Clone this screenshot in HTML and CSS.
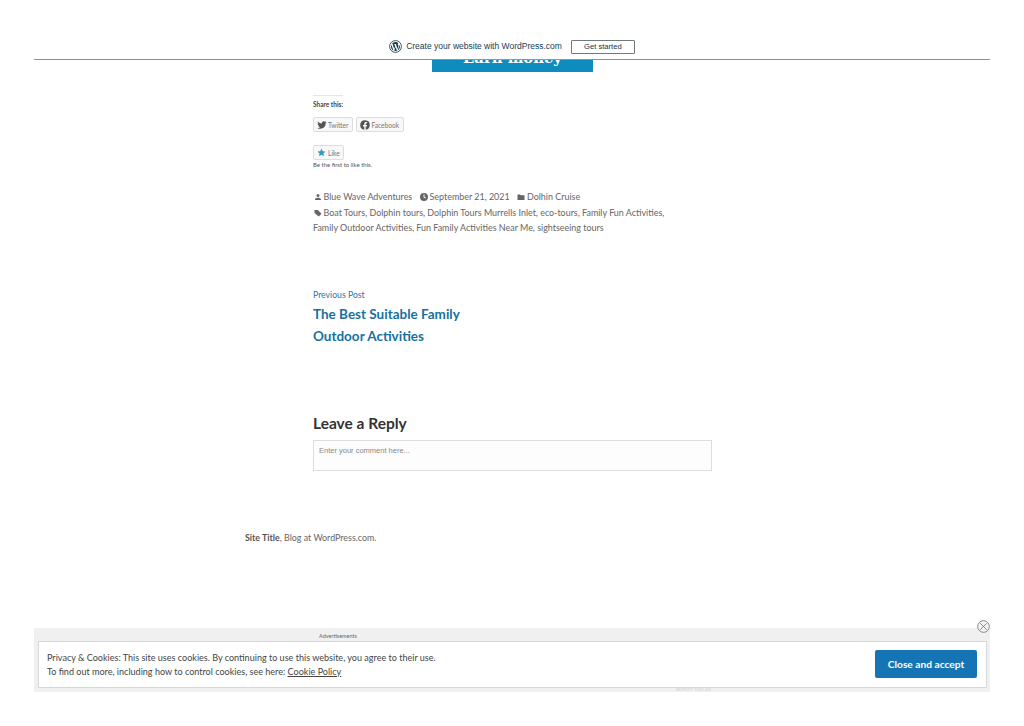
FILE: index.html
```html
<!DOCTYPE html>
<html lang="en">
<head>
<meta charset="utf-8">
<title>Blue Wave Adventures</title>
<link rel="stylesheet" href="styles.css">
</head>
<body>
<div class="page">
  <header class="wpbar">
    <svg class="wp-logo" viewBox="0 0 24 24" width="13" height="13"><circle cx="12" cy="12" r="10.9" fill="none" stroke="#16404f" stroke-width="1.6"/><path fill="#16404f" d="M3.6 12c0 3.3 1.9 6.200 4.700 7.500L4.300 8.600A8.400 8.400 0 0 0 3.600 12zm14-.4c0-1-.4-1.800-.7-2.300-.4-.7-.8-1.300-.8-2 0-.8.600-1.500 1.400-1.500h.1A8.400 8.400 0 0 0 5 7.400h.5c.9 0 2.200-.1 2.200-.1.4 0 .5.600 0 .7 0 0-.4 0-.9.100l2.900 8.700 1.800-5.300-1.300-3.400c-.4 0-.8-.1-.8-.1-.4 0-.4-.7 0-.7 0 0 1.300.1 2.100.1.900 0 2.200-.1 2.200-.1.400 0 .5.600 0 .7 0 0-.4 0-.9.100l2.900 8.600.8-2.700c.3-1.100.600-1.900.6-2.500zM12.100 12.800l-2.400 7.100a8.400 8.400 0 0 0 5.200-.1l-.1-.1zm7-4.600c0 .3.100.6.100.9 0 .9-.2 1.900-.7 3.100l-2.600 7.400a8.400 8.400 0 0 0 3.200-11.400z"/></svg>
    <span class="wp-text">Create your website with WordPress.com</span>
    <a class="wp-btn">Get started</a>
  </header>
  <main class="article">
    <div class="hero"><span>Earn money</span></div>
    <section class="share">
      <h3 class="share-title">Share this:</h3>
      <div class="share-row">
        <a class="chip">
          <svg viewBox="0 0 24 24" width="10" height="10"><path fill="#555" d="M23 5c-.8.400-1.700.6-2.600.7.900-.6 1.600-1.400 2-2.500-.9.500-1.900.9-2.900 1.100a4.600 4.600 0 0 0-7.800 4.200C8 8.300 4.600 6.500 2.400 3.700a4.600 4.600 0 0 0 1.400 6.100c-.7 0-1.400-.2-2.100-.6 0 2.200 1.600 4.100 3.700 4.600-.7.200-1.400.2-2.100.1.600 1.800 2.300 3.100 4.300 3.200A9.300 9.300 0 0 1 .8 19a13 13 0 0 0 20-11.500c.9-.7 1.700-1.500 2.200-2.500z"/></svg>
          Twitter
        </a>
        <a class="chip">
          <svg viewBox="0 0 24 24" width="10" height="10"><path fill="#555" d="M23.500 12a11.500 11.500 0 1 0-13.300 11.400v-8H7.300V12h2.900V9.500c0-2.900 1.700-4.500 4.300-4.500 1.300 0 2.600.2 2.600.2V8h-1.500c-1.400 0-1.900.9-1.900 1.800V12h3.200l-.5 3.400h-2.700v8A11.500 11.500 0 0 0 23.500 12z"/></svg>
          Facebook
        </a>
      </div>
      <a class="chip like">
        <svg viewBox="0 0 24 24" width="9" height="9"><path fill="#2e9ac6" d="M12 1.500l3.200 7 7.600.8-5.700 5.100 1.600 7.500L12 18l-6.700 3.900 1.600-7.500L1.200 9.300l7.600-.8z"/></svg>
        Like
      </a>
      <p class="like-note">Be the first to like this.</p>
    </section>
    <section class="meta">
      <p class="meta-line">
        <span class="meta-item"><svg viewBox="0 0 16 16" width="8" height="8"><path fill="#666" d="M8 8a3 3 0 1 0 0-6 3 3 0 0 0 0 6zm0 1.500c-2.700 0-6 1.300-6 3V14h12v-1.500c0-1.700-3.300-3-6-3z"/></svg>Blue Wave Adventures</span>
        <span class="meta-item"><svg viewBox="0 0 16 16" width="8" height="8"><path fill="#666" fill-rule="evenodd" d="M8 0a8 8 0 1 0 0 16A8 8 0 0 0 8 0zm-1 3h2v4.600l3 1.800-1 1.700-4-2.400z"/></svg>September 21, 2021</span>
        <span class="meta-item"><svg viewBox="0 0 16 16" width="8" height="8"><path fill="#666" d="M1 3h5l1.500 1.500H15V14H1z"/></svg>Dolhin Cruise</span>
      </p>
      <p class="meta-line"><svg viewBox="0 0 16 16" width="8" height="8"><path fill="#666" d="M1 2h6.500l7.500 7.500L9.500 15 1 8z"/></svg>Boat Tours, Dolphin tours, Dolphin Tours Murrells Inlet, eco-tours, Family Fun Activities,</p>
      <p class="meta-line">Family Outdoor Activities, Fun Family Activities Near Me, sightseeing tours</p>
    </section>
    <nav class="post-nav">
      <p class="post-nav-label">Previous Post</p>
      <a class="post-nav-title">The Best Suitable Family<br>Outdoor Activities</a>
    </nav>
    <section class="reply">
      <h2 class="reply-title">Leave a Reply</h2>
      <div class="comment-box">Enter your comment here...</div>
    </section>
  </main>
  <footer class="site-footer"><b>Site Title</b>, Blog at WordPress.com.</footer>
  <aside class="ad-strip">
    <span class="ad-label">Advertisements</span>
    <span class="ad-report">REPORT THIS AD</span>
    <div class="cookie">
      <div class="cookie-text">
        <p>Privacy &amp; Cookies: This site uses cookies. By continuing to use this website, you agree to their use.</p>
        <p>To find out more, including how to control cookies, see here: <a class="cookie-link">Cookie Policy</a></p>
      </div>
      <a class="cookie-btn">Close and accept</a>
    </div>
    <svg class="ad-close" viewBox="0 0 14 14" width="13" height="13"><circle cx="7" cy="7" r="6.300" fill="#f2f2f2" stroke="#666" stroke-width=".8"/><path stroke="#666" stroke-width=".8" d="M3.500 3.500l7 7m0-7l-7 7"/></svg>
  </aside>
</div>
</body>
</html>
```
FILE: styles.css
```css
* { box-sizing: border-box; }
html, body { margin: 0; padding: 0; background: #fff; }
body { font-family: Lato, "Noto Sans", sans-serif; color: #555; }
p, h2, h3 { margin: 0; }
.page { position: relative; width: 956px; height: 726px; margin: 0 34px; overflow: hidden; }
.wpbar { height: 60px; padding-top: 40px; border-bottom: 1px solid #8c9696; background: #fff; display: flex; justify-content: center; align-items: flex-start; position: relative; z-index: 2; font-family: "Liberation Sans", sans-serif; }
.wp-logo { margin-right: 4px; }
.wp-text { font-size: 8.500px; line-height: 13px; color: #16404f; margin-right: 9px; }
.wp-btn { width: 64px; height: 14px; border: 1px solid #6f7b7b; font-size: 7.600px; line-height: 12px; text-align: center; color: #16303c; border-radius: 1px; }
.article { margin-left: 279px; width: 399px; }
.hero { width: 161px; height: 12px; margin-left: 119px; background: #0e8cbd; overflow: hidden; color: #fff; font-family: "DejaVu Serif", serif; font-weight: 700; font-size: 14.800px; text-align: center; line-height: 0; }
.hero span { display: block; margin-top: -2px; }
.share { margin-top: 19px; }
.share-title { display: inline-block; font-size: 6.500px; line-height: 10px; font-weight: 700; color: #444; border-top: 1px solid #e6e6e6; padding-top: 4px; }
.share-row { display: flex; gap: 3px; margin-top: 7px; }
.chip { display: inline-flex; align-items: center; gap: 1px; height: 15px; padding: 0 4px 0 3px; border: 1px solid #ddd; border-radius: 2px; background: #f8f8f8; font-size: 6.600px; color: #777; }
.like { margin-top: 13px; gap: 2px; padding-right: 3px; }
.like-note { font-size: 6px; line-height: 8px; margin-top: 1px; color: #555; }
.meta { margin-top: 20px; font-size: 8.930px; line-height: 15.500px; color: #666; }
.meta-line { white-space: nowrap; }
.meta-line svg { margin: 0 1.500px 0 1px; vertical-align: -1px; }
.meta-item { margin-right: 4.500px; }
.post-nav { margin-top: 51px; }
.post-nav-label { font-size: 8.700px; line-height: 16px; color: #1f7aa8; }
.post-nav-title { display: block; font-size: 13.500px; line-height: 22.500px; font-weight: 700; color: #17719f; }
.reply { margin-top: 63px; }
.reply-title { font-size: 15.500px; line-height: 24px; font-weight: 700; color: #333; }
.comment-box { margin-top: 5px; height: 31px; border: 1px solid #ddd; background: #fdfdfd; padding: 5px; font-family: "Liberation Sans", sans-serif; font-size: 7.500px; line-height: 9px; color: #888; }
.site-footer { margin: 60px 0 0 211px; font-size: 8.900px; line-height: 14px; color: #666; }
.site-footer b { color: #555; }
.ad-strip { position: absolute; left: 0; right: 0; top: 628px; height: 64px; background: #f0f0f0; }
.ad-label { position: absolute; left: 285px; top: 4px; font-size: 5.500px; line-height: 8px; color: #666; }
.ad-report { position: absolute; left: 642px; top: 59px; font-size: 4.500px; line-height: 5px; color: #d4d4d4; }
.cookie { position: absolute; left: 4px; right: 3px; top: 13px; height: 47px; padding: 0 8px; background: #fff; border: 1px solid #d8d8d8; display: flex; justify-content: space-between; align-items: center; }
.cookie-text { font-size: 9.050px; line-height: 14px; color: #444; }
.cookie-link { text-decoration: underline; }
.cookie-btn { width: 102px; height: 28px; margin: 0 1px 1px 0; background: #1474b4; color: #fff; font-size: 10.200px; font-weight: 700; line-height: 28px; text-align: center; border-radius: 2px; }
.ad-close { position: absolute; right: 0; top: -8px; }
```
